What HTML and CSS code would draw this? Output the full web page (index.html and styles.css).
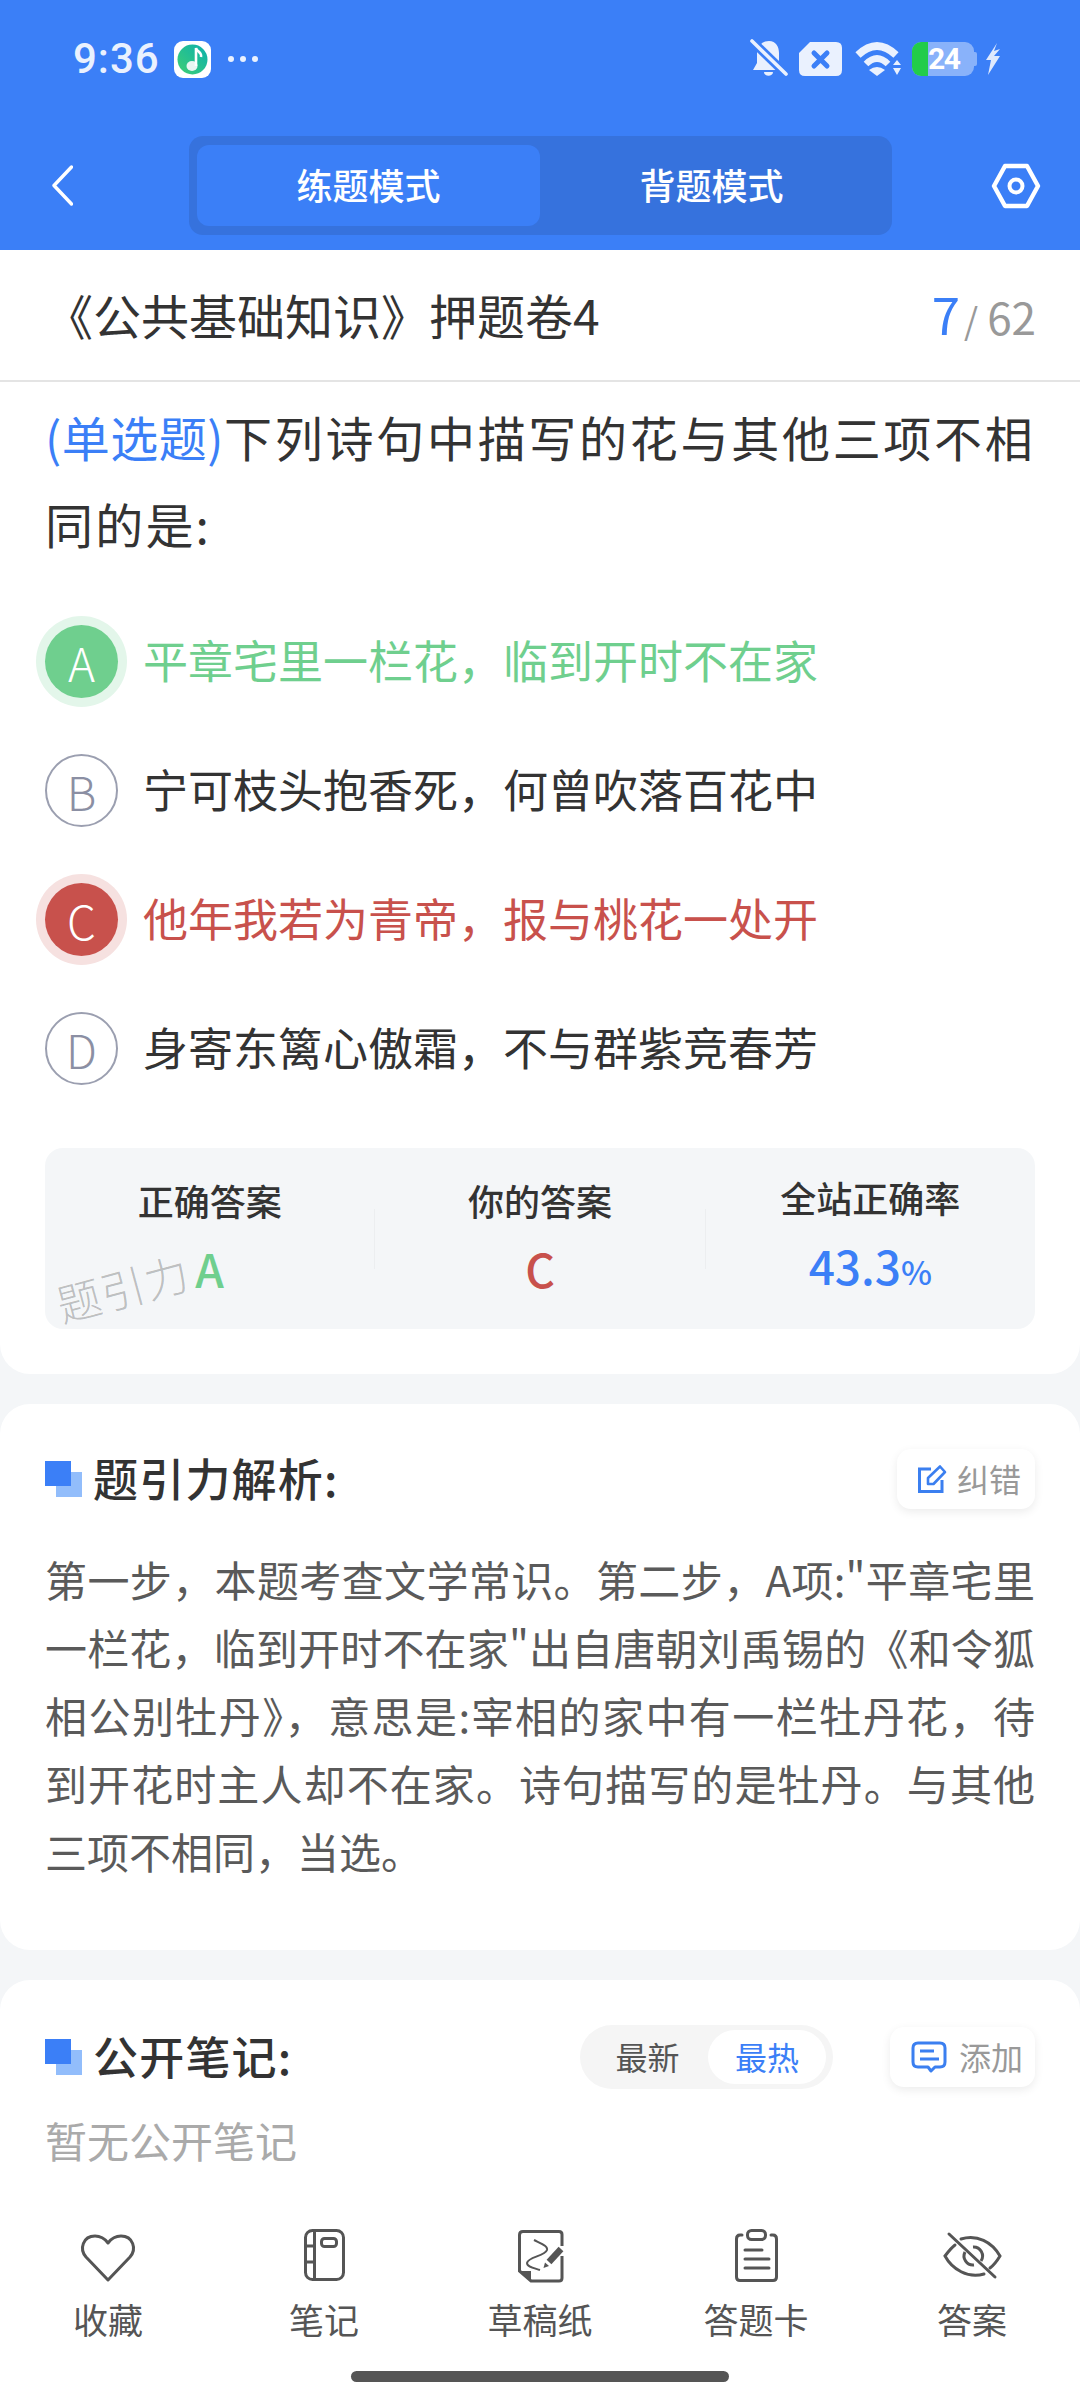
FILE: index.html
```html
<!DOCTYPE html>
<html lang="zh-CN">
<head>
  <meta charset="UTF-8" />
  <meta name="viewport" content="width=device-width, initial-scale=1.0"/>
  <title>练题模式</title>
  <link rel="stylesheet" href="styles.css">
</head>
<body>
  <div class="page">
    <!-- Blue header -->
    <header class="header">
      <div class="status-bar">
        <span class="time">9:36</span>
        <svg class="music-icon" width="37" height="37" viewBox="0 0 37 37">
          <defs>
            <linearGradient id="musicGrad" x1="0" y1="1" x2="1" y2="0">
              <stop offset="0" stop-color="#3fcf74"/>
              <stop offset="1" stop-color="#0bb0ae"/>
            </linearGradient>
          </defs>
          <rect width="37" height="37" rx="9" fill="#fff"/>
          <circle cx="18.5" cy="18.5" r="15" fill="url(#musicGrad)"/>
          <ellipse cx="18" cy="25" rx="5.5" ry="5" fill="#eaf6f2"/>
          <path d="M22 25 V7 C23 11 28 11 27 16" fill="none" stroke="#fff" stroke-width="2.6"/>
        </svg>
        <span class="dots"><i></i><i></i><i></i></span>
        <div class="status-right">
          <svg width="38" height="40" viewBox="0 0 38 40">
            <path d="M19 2 C26 2 29 8 29 14 V24 L33 31 H3 L7 24 V14 C7 8 12 2 19 2 Z" fill="#eaf1fe"/>
            <path d="M14 33 H23 C23 38 14 38 14 33 Z" fill="#eaf1fe"/>
            <path d="M3 3 L36 35" stroke="#3b7ff7" stroke-width="9"/>
            <path d="M2 2 L36 35" stroke="#eaf1fe" stroke-width="3.6" stroke-linecap="round"/>
          </svg>
          <svg width="43" height="34" viewBox="0 0 43 34">
            <path d="M11 0 H37 Q43 0 43 6 V28 Q43 34 37 34 H6 Q0 34 0 28 V11 Z" fill="#eaf1fe"/>
            <path d="M15 11 L28 24 M28 11 L15 24" stroke="#3b7ff7" stroke-width="5" stroke-linecap="round"/>
          </svg>
          <svg class="wifi-icon" width="46" height="34" viewBox="0 0 46 34">
            <path d="M3 13 Q22 -5 41 13" fill="none" stroke="#eaf1fe" stroke-width="7.5"/>
            <path d="M11 22 Q22 11 33 22" fill="none" stroke="#eaf1fe" stroke-width="6.5"/>
            <path d="M14 28 Q22 22 30 28 L22 34 Z" fill="#eaf1fe"/>
            <path d="M38 23 L42 18 L46 23 Z M38 26 H46 L42 33 Z" fill="#eaf1fe"/>
          </svg>
          <div class="battery">
            <div class="battery-body">
              <span class="battery-fill"></span>
              <span class="battery-num">24</span>
            </div>
            <span class="battery-nub"></span>
          </div>
          <svg class="bolt-icon" width="16" height="32" viewBox="0 0 16 32">
            <path d="M12 0 L1 17 H6 L3 32 L15 13 H9 L15 6 L9 8 Z" fill="#dfe9fd"/>
          </svg>
        </div>
      </div>
      <div class="toolbar">
        <svg class="back-icon" width="21" height="41" viewBox="0 0 21 41">
          <path d="M19.5 2 L2 20.5 L19.5 39" fill="none" stroke="#fff" stroke-width="3.4" stroke-linecap="round" stroke-linejoin="round"/>
        </svg>
        <div class="mode-tabs">
          <div class="mode-tab active">练题模式</div>
          <div class="mode-tab">背题模式</div>
        </div>
        <svg class="setting-icon" width="50" height="46" viewBox="0 0 50 46">
          <path d="M14 3 H36 L47 23 L36 43 H14 L3 23 Z" fill="none" stroke="#fff" stroke-width="4.4" stroke-linejoin="round"/>
          <circle cx="25" cy="23" r="6.5" fill="none" stroke="#fff" stroke-width="4"/>
        </svg>
      </div>
    </header>

    <main class="content">
      <!-- Question -->
      <section class="card question-card">
        <div class="paper-row">
          <div class="paper-title">《公共基础知识》押题卷4</div>
          <div class="paper-count"><b>7</b><i>/</i><span>62</span></div>
        </div>
        <div class="question-body">
          <p class="question-text">
            <span class="line"><span class="q-type">(单选题)</span>下列诗句中描写的花与其他三项不相</span>
            <span class="line last">同的是:</span>
          </p>
          <div class="option right">
            <span class="option-mark">A</span>
            <span class="option-text">平章宅里一栏花，临到开时不在家</span>
          </div>
          <div class="option">
            <span class="option-mark">B</span>
            <span class="option-text">宁可枝头抱香死，何曾吹落百花中</span>
          </div>
          <div class="option wrong">
            <span class="option-mark">C</span>
            <span class="option-text">他年我若为青帝，报与桃花一处开</span>
          </div>
          <div class="option">
            <span class="option-mark">D</span>
            <span class="option-text">身寄东篱心傲霜，不与群紫竞春芳</span>
          </div>
          <div class="stats">
            <div class="stat">
              <div class="stat-label">正确答案</div>
              <div class="stat-value green">A</div>
            </div>
            <span class="stat-sep"></span>
            <div class="stat">
              <div class="stat-label">你的答案</div>
              <div class="stat-value red">C</div>
            </div>
            <span class="stat-sep"></span>
            <div class="stat">
              <div class="stat-label">全站正确率</div>
              <div class="stat-value blue">43.3<small>%</small></div>
            </div>
            <div class="watermark">题引力</div>
          </div>
        </div>
      </section>

      <!-- Analysis -->
      <section class="card analysis-card">
        <div class="card-head">
          <span class="head-mark"></span>
          <h2>题引力解析:</h2>
          <div class="chip chip-right">
            <svg width="30" height="30" viewBox="0 0 30 30">
              <path d="M14 5 H2.5 V27.5 H25 V16" fill="none" stroke="#3b7ff0" stroke-width="3"/>
              <path d="M11 20 V14 L23 2.5 L28 8 L16.5 20 Z" fill="none" stroke="#3b7ff0" stroke-width="2.6" stroke-linejoin="round"/>
            </svg>
            <span>纠错</span>
          </div>
        </div>
        <p class="analysis-text">
          <span class="line">第一步，本题考查文学常识。第二步，A项:"平章宅里</span>
          <span class="line">一栏花，临到开时不在家"出自唐朝刘禹锡的《和令狐</span>
          <span class="line">相公别牡丹》，意思是:宰相的家中有一栏牡丹花，待</span>
          <span class="line">到开花时主人却不在家。诗句描写的是牡丹。与其他</span>
          <span class="line last">三项不相同，当选。</span>
        </p>
      </section>

      <!-- Notes -->
      <section class="card notes-card">
        <div class="card-head notes-head">
          <span class="head-mark"></span>
          <h2>公开笔记:</h2>
          <div class="sort-switch">
            <span class="sort-item">最新</span>
            <span class="sort-item active">最热</span>
          </div>
          <div class="chip chip-add">
            <svg width="36" height="32" viewBox="0 0 36 32">
              <path d="M7 2 H29 Q34 2 34 7 V21 Q34 26 29 26 H24 L20 30 L17 26 H7 Q2 26 2 21 V7 Q2 2 7 2 Z" fill="none" stroke="#3b7ff0" stroke-width="3" stroke-linejoin="round"/>
              <path d="M9 10 H23 M9 18 H28" stroke="#3b7ff0" stroke-width="3"/>
            </svg>
            <span>添加</span>
          </div>
        </div>
        <p class="empty-note">暂无公开笔记</p>
      </section>
    </main>

    <!-- Bottom actions -->
    <nav class="bottom-nav">
      <div class="nav-items">
        <div class="nav-item">
          <svg width="60" height="60" viewBox="0 0 60 60">
            <path d="M30 55 L8 32 C1 24 5 11 17 11 C23 11 27 14 30 18 C33 14 37 11 43 11 C55 11 59 24 52 32 Z" fill="none" stroke="#555" stroke-width="3" stroke-linejoin="round"/>
          </svg>
          <span>收藏</span>
        </div>
        <div class="nav-item">
          <svg width="60" height="60" viewBox="0 0 60 60">
            <rect x="11.5" y="5.5" width="38" height="49" rx="7" fill="none" stroke="#555" stroke-width="3"/>
            <path d="M20.5 5.5 V54.5 M11.5 21 H20.5 M11.5 37 H20.5" stroke="#555" stroke-width="3"/>
            <rect x="27.5" y="13.5" width="15" height="8" rx="3" fill="none" stroke="#555" stroke-width="3"/>
          </svg>
          <span>笔记</span>
        </div>
        <div class="nav-item">
          <svg width="60" height="60" viewBox="0 0 60 60">
            <path d="M52 21 V9.5 Q52 6.5 49 6.5 H13 Q9.5 6.5 9.5 10 V46 L21 56 H49 Q52 56 52 53 V31" fill="none" stroke="#555" stroke-width="3"/>
            <path d="M9.5 46 H21 V56 Z" fill="#555"/>
            <path d="M24 15 C32 19 38 21 37 25 C35 31 18 32 17 38 C17 42 24 43 30 45" fill="none" stroke="#555" stroke-width="2"/>
            <path d="M39 37 L51 24" stroke="#555" stroke-width="6.5"/>
            <path d="M33.5 43 L35 37.5 L39 41 Z" fill="#555"/>
          </svg>
          <span>草稿纸</span>
        </div>
        <div class="nav-item">
          <svg width="60" height="60" viewBox="0 0 60 60">
            <rect x="21.5" y="5.5" width="18" height="9" rx="4" fill="none" stroke="#555" stroke-width="3"/>
            <path d="M16 10 H14 Q10.5 10 10.5 14 V52 Q10.5 55.5 14 55.5 H47 Q50.5 55.5 50.5 52 V14 Q50.5 10 47 10 H45" fill="none" stroke="#555" stroke-width="3" stroke-linecap="round"/>
            <path d="M19 25 H36 M19 34 H43 M19 43 H43" stroke="#555" stroke-width="3" stroke-linecap="round"/>
          </svg>
          <span>答题卡</span>
        </div>
        <div class="nav-item">
          <svg width="60" height="60" viewBox="0 0 60 60">
            <path d="M19 14 C35 9 50 17 58 31 C55 36 52 40 48 43 M13 20 C9 23 6 27 3 31 C10 44 26 54 42 49" fill="none" stroke="#555" stroke-width="3" stroke-linecap="round"/>
            <path d="M31 22 A9 9 0 0 1 39 36 M23 27 A9 9 0 0 0 32 40" fill="none" stroke="#555" stroke-width="3"/>
            <path d="M7 9 L53 52" stroke="#555" stroke-width="3" stroke-linecap="round"/>
          </svg>
          <span>答案</span>
        </div>
      </div>
      <div class="home-bar"></div>
    </nav>
  </div>
</body>
</html>
```
FILE: styles.css
```css
:root {
  --blue: #3b7ff7;
  --green: #6fcf8e;
  --red: #c8514c;
  --text: #333;
  --page-bg: #f4f6f8;
}

* {
  box-sizing: border-box;
}

html, body {
  margin: 0;
  padding: 0;
}

body {
  font-family: "Noto Sans CJK SC", "Noto Sans", sans-serif;
  color: var(--text);
}

.page {
  width: 1080px;
  height: 2400px;
  display: flex;
  flex-direction: column;
  overflow: hidden;
  background: var(--page-bg);
}

/* header */
.header {
  height: 250px;
  flex: none;
  background: var(--blue);
}

.status-bar {
  height: 118px;
  display: flex;
  align-items: center;
  padding: 0 79px 0 73px;
  color: #eaf1fe;
}

.time {
  font-family: Roboto, sans-serif;
  font-size: 42px;
  font-weight: 500;
  letter-spacing: 1px;
  line-height: 1;
}

.music-icon {
  margin-left: 14px;
}

.dots {
  display: flex;
  gap: 6px;
  margin-left: 17px;
  margin-bottom: 1px;
}

.dots i {
  width: 6px;
  height: 6px;
  border-radius: 50%;
  background: #eaf1fe;
}

.status-right {
  margin-left: auto;
  display: flex;
  align-items: center;
  gap: 11px;
}

.wifi-icon {
  margin-left: 2px;
}

.battery {
  width: 65px;
  display: flex;
  align-items: center;
}

.battery-body {
  width: 62px;
  height: 34px;
  display: flex;
  align-items: center;
  border-radius: 9px;
  background: rgba(255, 255, 255, 0.4);
  overflow: hidden;
}

.battery-nub {
  width: 3px;
  height: 14px;
  border-radius: 0 2px 2px 0;
  background: rgba(255, 255, 255, 0.4);
}

.battery-fill {
  width: 16px;
  height: 100%;
  background: #22cc4a;
}

.battery-num {
  font-family: Roboto, sans-serif;
  font-size: 30px;
  font-weight: 700;
  letter-spacing: -1.5px;
  color: #fff;
  line-height: 1;
}

.bolt-icon {
  margin-left: -3px;
}

.toolbar {
  display: flex;
  align-items: center;
  height: 99px;
  margin-top: 18px;
  padding-left: 52px;
}

.mode-tabs {
  display: flex;
  width: 703px;
  height: 99px;
  margin-left: 116px;
  margin-right: 99px;
  padding: 9px 9px 9px 8px;
  background: #3672dd;
  border-radius: 14px;
}

.mode-tab {
  width: 343px;
  display: flex;
  align-items: center;
  justify-content: center;
  padding-bottom: 4px;
  color: #fff;
  font-size: 36px;
  font-weight: 500;
  border-radius: 12px;
}

.mode-tab.active {
  background: var(--blue);
}

/* scrolling part */
.content {
  flex: 1;
  min-height: 0;
  overflow: hidden;
  display: flex;
  flex-direction: column;
  gap: 30px;
}

.card {
  background: #fff;
  border-radius: 30px;
  flex: none;
}

.question-card {
  border-radius: 0 0 30px 30px;
  padding-bottom: 45px;
}

.paper-row {
  height: 132px;
  display: flex;
  align-items: center;
  justify-content: space-between;
  padding: 0 44px 3px 45px;
  border-bottom: 2px solid #e4e4e4;
}

.paper-title {
  font-size: 48px;
  line-height: 60px;
}

.paper-count {
  display: flex;
  align-items: baseline;
  color: #999;
  font-size: 44px;
  margin-bottom: 2px;
}

.paper-count b {
  font-size: 51px;
  font-weight: 400;
  color: var(--blue);
}

.paper-count i {
  font-style: normal;
  font-size: 36px;
  margin: 0 9px 0 4px;
}

.question-body {
  padding: 11px 45px 0;
}

.question-text {
  margin: 0 0 30px;
  font-size: 48px;
  line-height: 87px;
  letter-spacing: 2.2px;
}

.q-type {
  color: var(--blue);
  letter-spacing: 0;
}

.option {
  height: 129px;
  display: flex;
  align-items: center;
  gap: 25px;
}

.option-mark {
  width: 73px;
  height: 73px;
  flex: none;
  display: flex;
  align-items: center;
  justify-content: center;
  border: 2px solid #9b9fb0;
  border-radius: 50%;
  color: #8b8fa3;
  font-size: 46px;
  font-weight: 300;
}

.option-text {
  padding-bottom: 3px;
  font-size: 45px;
  line-height: 60px;
}

.option.right .option-mark {
  border: none;
  background: var(--green);
  color: #fff;
  box-shadow: 0 0 0 9px #e3f6ea;
}

.option.right .option-text {
  color: var(--green);
}

.option.wrong .option-mark {
  border: none;
  background: var(--red);
  color: #fff;
  box-shadow: 0 0 0 9px #f6e1e0;
}

.option.wrong .option-text {
  color: var(--red);
}

.stats {
  position: relative;
  display: flex;
  align-items: center;
  height: 181px;
  margin-top: 35px;
  background: var(--page-bg);
  border-radius: 18px;
}

.stat {
  flex: 1;
  text-align: center;
  padding-bottom: 4px;
}

.stat-label {
  font-size: 36px;
  font-weight: 500;
  line-height: 50px;
}

.stat-value {
  margin-top: 13px;
  font-size: 46px;
  font-weight: 500;
  line-height: 60px;
}

.stat-value small {
  font-size: 33px;
}

.green { color: var(--green); }
.red { color: var(--red); }
.blue { color: var(--blue); }

.stat-sep {
  width: 1px;
  height: 60px;
  background: #eceef0;
}

.watermark {
  position: absolute;
  left: 10px;
  top: 110px;
  font-size: 44px;
  line-height: 58px;
  letter-spacing: 1px;
  font-weight: 300;
  color: rgba(0, 0, 0, 0.24);
  transform: rotate(-15deg);
}

/* analysis + notes */
.analysis-card {
  padding: 45px 45px 65px;
}

.card-head {
  display: flex;
  align-items: center;
  height: 60px;
}

.head-mark {
  position: relative;
  width: 37px;
  height: 36px;
  flex: none;
  margin-right: 11px;
}

.head-mark::before,
.head-mark::after {
  content: "";
  position: absolute;
  width: 26px;
  height: 25px;
}

.head-mark::after {
  right: 0;
  bottom: 0;
  background: #92bdfb;
}

.head-mark::before {
  left: 0;
  top: 0;
  background: var(--blue);
  z-index: 1;
}

h2 {
  margin: 0 0 3px;
  font-size: 45px;
  font-weight: 500;
  line-height: 60px;
  letter-spacing: 1.2px;
  color: var(--text);
}

.chip {
  display: flex;
  align-items: center;
  gap: 10px;
  height: 60px;
  padding: 0 14px 0 20px;
  background: #fff;
  border-radius: 14px;
  box-shadow: 0 3px 10px rgba(0, 0, 0, 0.08);
  color: #999;
  font-size: 32px;
}

.chip span {
  margin-bottom: 3px;
}

.chip-right {
  margin-left: auto;
}

.chip-add {
  gap: 12px;
  padding: 0 12px 0 21px;
}

.analysis-text {
  margin: 36px 0 0;
  font-size: 42px;
  line-height: 68px;
  color: #5a5a5a;
}

.line {
  display: block;
  text-align: justify;
  text-align-last: justify;
}

.line.last {
  text-align-last: left;
}

.notes-card {
  padding: 45px 45px 80px;
}

.notes-head {
  height: 64px;
}

.sort-switch {
  display: flex;
  align-items: center;
  height: 64px;
  margin-left: auto;
  margin-right: 57px;
  padding: 0 7px;
  background: #f5f5f5;
  border-radius: 32px;
  font-size: 32px;
  color: #555;
}

.sort-item {
  width: 121px;
  height: 54px;
  display: flex;
  align-items: center;
  justify-content: center;
  padding-bottom: 3px;
  border-radius: 27px;
}

.sort-item.active {
  width: 118px;
  background: #fff;
  color: var(--blue);
}

.empty-note {
  margin: 21px 0 0;
  font-size: 42px;
  line-height: 60px;
  color: #aaa;
}

/* bottom bar */
.bottom-nav {
  height: 190px;
  flex: none;
  padding-top: 15px;
  background: #fff;
  display: flex;
  flex-direction: column;
  align-items: center;
}

.nav-items {
  width: 100%;
  display: grid;
  grid-template-columns: repeat(5, 1fr);
}

.nav-item {
  display: flex;
  flex-direction: column;
  align-items: center;
  gap: 9px;
  font-size: 35px;
  line-height: 50px;
  color: #555;
}

.home-bar {
  width: 378px;
  height: 11px;
  margin-top: 27px;
  border-radius: 6px;
  background: #555;
}
```
